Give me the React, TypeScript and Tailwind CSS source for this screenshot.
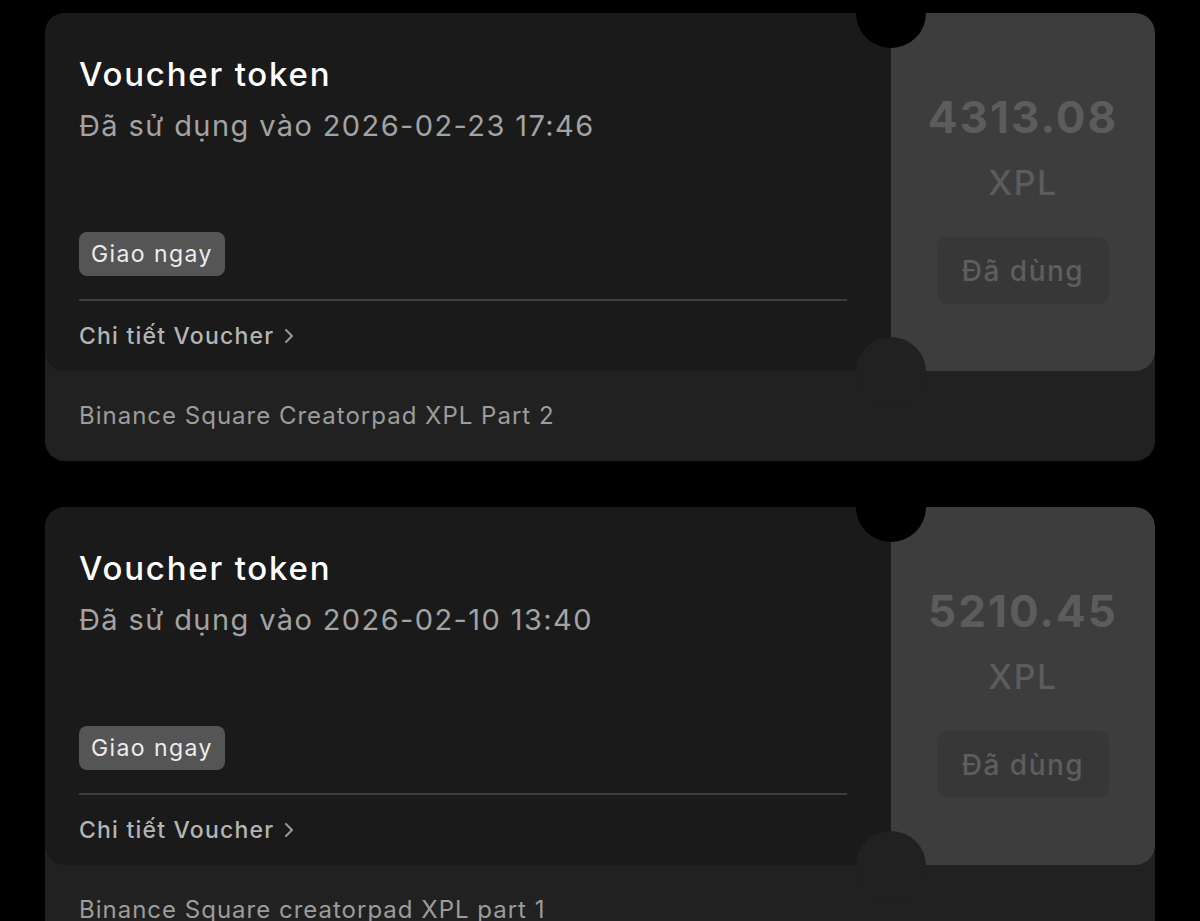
import React from 'react';

type Voucher = {
  usedAt: string;
  amount: string;
  campaign: string;
};

const vouchers: Voucher[] = [
  { usedAt: '2026-02-23 17:46', amount: '4313.08', campaign: 'Binance Square Creatorpad XPL Part 2' },
  { usedAt: '2026-02-10 13:40', amount: '5210.45', campaign: 'Binance Square creatorpad XPL part 1' },
];

const VoucherCard: React.FC<{ v: Voucher }> = ({ v }) => {
  return (
    <div className="relative shrink-0 rounded-[20px] bg-[#212121] overflow-hidden">
      <div className="flex h-[358px]">
        {/* left: voucher info */}
        <div className="flex-1 bg-[#1a1a1a] rounded-bl-[20px] pl-[34px] pr-[44px] pt-[41px] flex flex-col">
          <div className="text-[33px] leading-[40px] text-white font-medium tracking-[1.8px]">Voucher token</div>
          <div className="mt-[12px] text-[29px] leading-[40px] text-[#a3a3a3] tracking-[1.4px]">Đã sử dụng vào {v.usedAt}</div>
          <div className="mt-[86px]">
            <span className="inline-flex items-center h-[44px] px-[12px] rounded-[8px] bg-[#555555] text-[23px] text-[#ececec] tracking-[1.4px]">
              Giao ngay
            </span>
          </div>
          <div className="mt-[23px] h-[2px] bg-[#3e3e3e]" />
          <div className="mt-[20px] flex items-center gap-[9px] h-[30px] text-[23px] font-medium text-[#b4b4b4] tracking-[1.2px]">
            Chi tiết Voucher
            <svg width="12" height="18" viewBox="0 0 12 18" fill="none" stroke="#9a9a9a" strokeWidth="2" strokeLinecap="round" strokeLinejoin="round">
              <path d="M3 3l6 6-6 6" />
            </svg>
          </div>
        </div>
        {/* right: amount */}
        <div className="w-[264px] bg-[#3d3d3d] rounded-r-[20px] flex flex-col items-center pt-[74px]">
          <div className="text-[44px] leading-[60px] font-bold text-[#5c5c5c] tracking-[2px]">{v.amount}</div>
          <div className="mt-[14px] text-[34px] leading-[44px] font-medium text-[#5c5c5c] tracking-[1.5px]">XPL</div>
          <div className="mt-[32px] w-[172px] h-[67px] rounded-[10px] bg-[#373737] flex items-center justify-center text-[28px] font-medium text-[#5e5e5e] tracking-[1.5px]">
            Đã dùng
          </div>
        </div>
      </div>
      <div className="h-[90px] pl-[34px] flex items-center text-[24px] text-[#9c9c9c] tracking-[1px]">{v.campaign}</div>
      {/* notches */}
      <div className="absolute left-[811px] top-[-35px] w-[70px] h-[70px] rounded-full bg-black" />
      <div className="absolute left-[811px] top-[324px] w-[70px] h-[70px] rounded-full bg-[#212121]" />
    </div>
  );
};

export default function App() {
  return (
    <div className="h-[921px] overflow-hidden bg-black px-[45px] pt-[13px] flex flex-col gap-[46px]" style={{ fontFamily: 'Inter, "Noto Sans", sans-serif' }}>
      {vouchers.map((v) => (
        <VoucherCard key={v.amount} v={v} />
      ))}
    </div>
  );
}
